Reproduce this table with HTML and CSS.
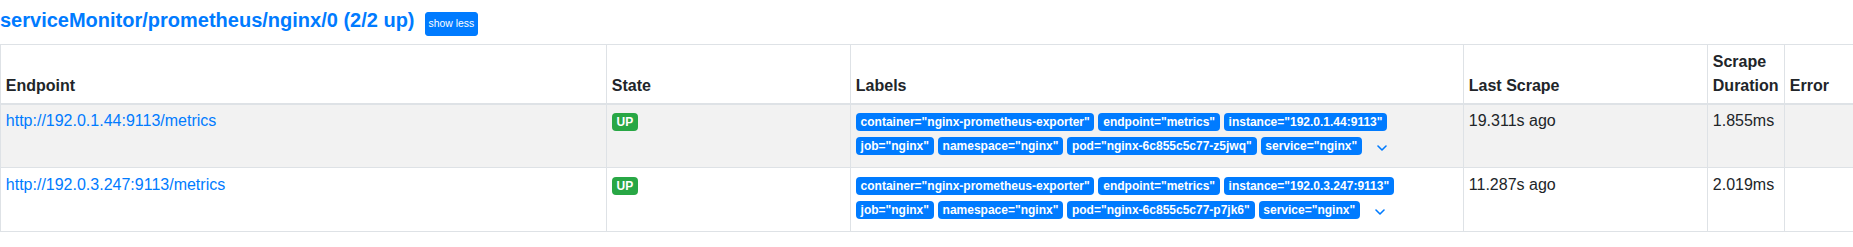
FILE: index.html
```html
<!DOCTYPE html>
<html lang="en">
<head>
  <meta charset="UTF-8" />
  <meta name="viewport" content="width=device-width, initial-scale=1.0" />
  <title>Targets</title>
  <link rel="stylesheet" href="styles.css">
</head>
<body>
  <div class="page">
    <!-- Scrape pool header -->
    <div class="pool-head">
      <a class="pool-title" href="#">serviceMonitor/prometheus/nginx/0 (2/2 up)</a>
      <button class="btn-less">show less</button>
    </div>

    <table class="targets">
      <colgroup>
        <col class="c-endpoint">
        <col class="c-state">
        <col class="c-labels">
        <col class="c-last">
        <col class="c-dur">
        <col class="c-err">
      </colgroup>
      <thead>
        <tr>
          <th>Endpoint</th>
          <th>State</th>
          <th>Labels</th>
          <th>Last Scrape</th>
          <th>Scrape Duration</th>
          <th>Error</th>
        </tr>
      </thead>
      <tbody>
        <tr class="odd">
          <td><a href="#">http://192.0.1.44:9113/metrics</a></td>
          <td><span class="badge badge-up">UP</span></td>
          <td><span class="badge">container="nginx-prometheus-exporter"</span><span class="badge">endpoint="metrics"</span><span class="badge">instance="192.0.1.44:9113"</span><span class="badge">job="nginx"</span><span class="badge">namespace="nginx"</span><span class="badge">pod="nginx-6c855c5c77-z5jwq"</span><span class="badge">service="nginx"</span><span class="toggle" role="button"><svg width="10" height="6" viewBox="0 0 10 6"><path d="M1 1L5 5L9 1" fill="none" stroke="#007bff" stroke-width="1.6" stroke-linecap="round" stroke-linejoin="round"/></svg></span></td>
          <td>19.311s ago</td>
          <td>1.855ms</td>
          <td></td>
        </tr>
        <tr>
          <td><a href="#">http://192.0.3.247:9113/metrics</a></td>
          <td><span class="badge badge-up">UP</span></td>
          <td><span class="badge">container="nginx-prometheus-exporter"</span><span class="badge">endpoint="metrics"</span><span class="badge">instance="192.0.3.247:9113"</span><span class="badge">job="nginx"</span><span class="badge">namespace="nginx"</span><span class="badge">pod="nginx-6c855c5c77-p7jk6"</span><span class="badge">service="nginx"</span><span class="toggle" role="button"><svg width="10" height="6" viewBox="0 0 10 6"><path d="M1 1L5 5L9 1" fill="none" stroke="#007bff" stroke-width="1.6" stroke-linecap="round" stroke-linejoin="round"/></svg></span></td>
          <td>11.287s ago</td>
          <td>2.019ms</td>
          <td></td>
        </tr>
      </tbody>
    </table>
  </div>
</body>
</html>
```

FILE: styles.css
```css
body { margin: 0; font-family: "Liberation Sans", Arial, sans-serif; font-size: 16px; line-height: 1.5; color: #212529; background: #fff; }
a { color: #007bff; text-decoration: none; }
.page { width: 100%; overflow: hidden; }

/* pool header */
.pool-head { display: flex; align-items: baseline; margin: 8px 0; }
.pool-title { font-size: 20px; font-weight: 700; line-height: 24px; }
.btn-less {
  margin-left: 10px; font-family: inherit; font-size: 10.4px; line-height: 16px;
  padding: 3px 3px; color: #fff; background: #007bff; border: 1px solid #007bff;
  border-radius: 3px; cursor: pointer;
}

/* targets table */
.targets { width: 1900px; table-layout: fixed; border-collapse: collapse; }
.c-endpoint { width: 606px; }
.c-state { width: 244px; }
.c-labels { width: 613px; }
.c-last { width: 244px; }
.c-dur { width: 77px; }
.targets th, .targets td { padding: 4.8px; border: 1px solid #dee2e6; text-align: left; vertical-align: top; }
.targets th { vertical-align: bottom; border-bottom-width: 2px; font-weight: 700; }
.targets tr.odd td { background: #f2f2f2; }

.badge {
  display: inline-block; padding: 3px 4.8px; margin-right: 4px; font-size: 12px; font-weight: 700;
  line-height: 1; color: #fff; background: #007bff; border-radius: 4px; white-space: nowrap;
}
.badge-up { background: #28a745; }

.toggle {
  display: inline-block; padding: 2px 11px 11px; vertical-align: -12px; cursor: pointer;
}
.toggle svg { display: block; }
```
